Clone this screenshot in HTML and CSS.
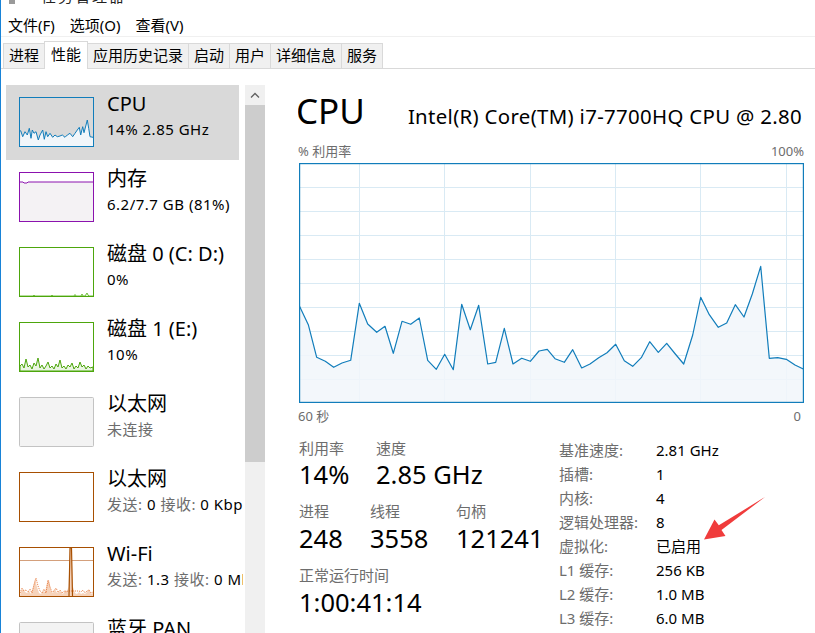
FILE: index.html
```html
<!DOCTYPE html>
<html lang="zh-CN">
<head>
<meta charset="utf-8">
<title>任务管理器</title>
<link rel="stylesheet" href="styles.css">
</head>
<body>
<div class="win">
  <div class="titlebar">
    <span class="ticon"></span><span class="ttext">任务管理器</span>
  </div>
  <div class="menubar">
    <span class="menu">文件(F)</span><span class="menu">选项(O)</span><span class="menu">查看(V)</span>
  </div>
  <div class="tabs">
    <div class="tab">进程</div>
    <div class="tab active">性能</div>
    <div class="tab">应用历史记录</div>
    <div class="tab">启动</div>
    <div class="tab">用户</div>
    <div class="tab">详细信息</div>
    <div class="tab">服务</div>
  </div>
  <div class="content">
    <div class="side">
      <div class="list">
        <div class="item selected">
          <svg class="thumb" width="75" height="50" viewBox="0 0 75 50">
            <polygon fill="#f1f6fa" points="1,49 1.7,33.7 3.7,39.7 6,34.7 8.3,38 10.3,31.3 12,41.3 13.3,33 15,36.3 17,34.7 19.3,43 21,38 23.7,33 25.3,42.3 27,34.7 28.7,39.7 31,36.3 33.7,40.3 36,38 38.3,39.7 41,39 43.3,38 46,40.3 48.3,38 51,36.3 53.7,39.7 56,36.3 58.3,33 60.3,30.3 61.7,38 63.7,29.7 65,35.7 67,28 68.3,23 69.7,31.3 71,39.7 74,40.3 74,49"/>
            <polyline fill="none" stroke="#117dbb" stroke-width="1" points="1,34 1.7,33.7 3.7,39.7 6,34.7 8.3,38 10.3,31.3 12,41.3 13.3,33 15,36.3 17,34.7 19.3,43 21,38 23.7,33 25.3,42.3 27,34.7 28.7,39.7 31,36.3 33.7,40.3 36,38 38.3,39.7 41,39 43.3,38 46,40.3 48.3,38 51,36.3 53.7,39.7 56,36.3 58.3,33 60.3,30.3 61.7,38 63.7,29.7 65,35.7 67,28 68.3,23 69.7,31.3 71,39.7 74,40.3"/>
            <rect x="0.5" y="0.5" width="74" height="49" fill="none" stroke="#117dbb"/>
          </svg>
          <div class="itext">
            <div class="ititle">CPU</div>
            <div class="isub">14% 2.85 GHz</div>
          </div>
        </div>
        <div class="item">
          <svg class="thumb" width="75" height="50" viewBox="0 0 75 50">
            <polygon fill="#f4f2f4" points="1,10 4,10 5,11 8,11 9,10 74,10 74,49 1,49"/>
            <polyline fill="none" stroke="#8b12ae" stroke-width="1" points="1,10 4,10 5,11 8,11 9,10 74,10"/>
            <rect x="0.5" y="0.5" width="74" height="49" fill="none" stroke="#8b12ae"/>
          </svg>
          <div class="itext">
            <div class="ititle">内存</div>
            <div class="isub">6.2/7.7 GB (81%)</div>
          </div>
        </div>
        <div class="item">
          <svg class="thumb" width="75" height="50" viewBox="0 0 75 50">
            <polyline fill="#e5f2dc" stroke="#6fbf3a" stroke-width="1" points="1,49 14,49 15,48 16,49 32,49 33,48 34,49 55,49 56,47.5 57,49 62,49 63,47 64,49 66,49 68,46 69,48 70,49 74,49"/>
            <rect x="0.5" y="0.5" width="74" height="49" fill="none" stroke="#4da60c"/>
          </svg>
          <div class="itext">
            <div class="ititle">磁盘 0 (C: D:)</div>
            <div class="isub">0%</div>
          </div>
        </div>
        <div class="item">
          <svg class="thumb" width="75" height="50" viewBox="0 0 75 50">
            <polygon fill="#eaf5e2" stroke="#4da60c" stroke-width="1" points="1,49 1,44 3,42 5,46 7,37 9,45 11,43 13,47 15,41 17,44 19,36 21,46 23,43 25,47 27,44 29,40 31,46 33,44 35,47 37,42 39,45 41,38 43,46 45,44 47,47 49,43 51,45 53,41 55,47 57,44 59,46 61,40 63,45 65,43 67,47 69,44 71,46 74,45 74,49"/>
            <rect x="0.5" y="0.5" width="74" height="49" fill="none" stroke="#4da60c"/>
          </svg>
          <div class="itext">
            <div class="ititle">磁盘 1 (E:)</div>
            <div class="isub">10%</div>
          </div>
        </div>
        <div class="item">
          <svg class="thumb" width="75" height="50" viewBox="0 0 75 50">
            <rect x="0.5" y="0.5" width="74" height="49" rx="1" fill="#f3f3f3" stroke="#c3c3c3"/>
          </svg>
          <div class="itext">
            <div class="ititle">以太网</div>
            <div class="isub grey">未连接</div>
          </div>
        </div>
        <div class="item">
          <svg class="thumb" width="75" height="50" viewBox="0 0 75 50">
            <rect x="0.5" y="0.5" width="74" height="49" fill="#fff" stroke="#a74f01"/>
          </svg>
          <div class="itext">
            <div class="ititle">以太网</div>
            <div class="isub"><span class="grey">发送:</span> 0 <span class="grey">接收:</span> 0 Kbps</div>
          </div>
        </div>
        <div class="item">
          <svg class="thumb" width="75" height="50" viewBox="0 0 75 50">
            <rect x="0.5" y="0.5" width="74" height="49" fill="#fff"/>
            <line x1="1" y1="13.5" x2="74" y2="13.5" stroke="#d4a07c" stroke-width="1"/>
            <polygon fill="#f6d3bb" points="1,49 2,44 4,42 6,45 8,46 10,44 12,47 14,40 16,32 18,40 20,46 22,47 24,44 26,45 28,36 30,33 32,44 34,46 36,42 38,46 40,44 42,45 44,47 46,43 48,44 49.5,40 51,2 52.5,2 54,40 56,46 58,47 60,45 62,47 64,46 66,47 68,45 70,42 72,47 74,46 74,49"/>
            <polyline fill="none" stroke="#e87d42" stroke-width="1" stroke-dasharray="1 1" points="1,46 3,41 5,44 7,43 9,45 11,42 13,46 15,38 17,31 19,39 21,44 23,46 25,42 27,46 29,33 31,40 33,45 35,44 37,41 39,45 41,43 43,46 45,44 47,45 49,44 60,44 62,45 64,43 66,46 68,44 70,43 72,46 74,45"/>
            <polyline fill="none" stroke="#a74f01" stroke-width="1.2" points="50,49 51,1 52.5,1 53.5,49"/>
            <rect x="0.5" y="0.5" width="74" height="49" fill="none" stroke="#a74f01"/>
          </svg>
          <div class="itext">
            <div class="ititle">Wi-Fi</div>
            <div class="isub"><span class="grey">发送:</span> 1.3 <span class="grey">接收:</span> 0 Mbps</div>
          </div>
        </div>
        <div class="item">
          <svg class="thumb" width="75" height="50" viewBox="0 0 75 50">
            <rect x="0.5" y="0.5" width="74" height="49" rx="1" fill="#f3f3f3" stroke="#c3c3c3"/>
          </svg>
          <div class="itext">
            <div class="ititle">蓝牙 PAN</div>
            <div class="isub grey">未连接</div>
          </div>
        </div>
      </div>
      <div class="scrollbar">
        <div class="sbtn">
          <svg width="20" height="20" viewBox="0 0 20 20"><polyline points="6,12.5 10,8.5 14,12.5" fill="none" stroke="#606060" stroke-width="1.3"/></svg>
        </div>
        <div class="sthumb"></div>
        <div class="strack"></div>
      </div>
    </div>
    <div class="main">
      <div class="header">
        <span class="big">CPU</span>
        <span class="model">Intel(R) Core(TM) i7-7700HQ CPU @ 2.80</span>
      </div>
      <div class="axis top"><span>% 利用率</span><span>100%</span></div>
      <svg class="chart" width="505" height="240" viewBox="298 164 505 240">
        <g stroke="#d9eaf4" stroke-width="1">
          <line x1="298" y1="188.5" x2="802" y2="188.5"/>
          <line x1="298" y1="212.5" x2="802" y2="212.5"/>
          <line x1="298" y1="236.5" x2="802" y2="236.5"/>
          <line x1="298" y1="260.5" x2="802" y2="260.5"/>
          <line x1="298" y1="284.5" x2="802" y2="284.5"/>
          <line x1="298" y1="308.5" x2="802" y2="308.5"/>
          <line x1="298" y1="332.5" x2="802" y2="332.5"/>
          <line x1="298" y1="356.5" x2="802" y2="356.5"/>
          <line x1="298" y1="380.5" x2="802" y2="380.5"/>
          <line x1="358.5" y1="164" x2="358.5" y2="403"/>
          <line x1="443.5" y1="164" x2="443.5" y2="403"/>
          <line x1="529.5" y1="164" x2="529.5" y2="403"/>
          <line x1="614.5" y1="164" x2="614.5" y2="403"/>
          <line x1="699.5" y1="164" x2="699.5" y2="403"/>
          <line x1="785.5" y1="164" x2="785.5" y2="403"/>
        </g>
        <polygon fill="#f1f6fa" fill-opacity="0.85" points="298.3,306.7 307.3,325.7 315.7,358.3 324.3,362.3 332.7,368.3 341,364 349.7,361.3 358.3,304.3 366.7,325 375.7,333.3 384,327.3 392.3,354.3 401,322.3 409.7,325.3 418.3,319 426.7,361.3 435.3,370.3 443.7,355.3 452.3,370.7 460.7,305.3 469.3,330.7 477.7,306.3 486.7,365 494.7,363.3 503.3,329.3 512,365 520.7,359.3 529.3,362.3 538,352 546.3,350.3 554,359.7 563.3,363.3 571.7,350.7 580.7,369 589,365 597.7,358.7 606,353.7 614.7,345.3 623.3,361.7 631.7,367.3 640.3,358.7 648.7,342.7 657.3,353.3 665.7,344.3 674.3,355 682.7,365 691.7,336 699.7,298.3 708.3,315.7 717.3,328.3 725.7,324 734.3,305.7 743,318 751.3,295 759.7,267.3 768.3,359.3 776.7,358.7 785.3,360.3 794,366 802.3,370 802.3,403 298.3,403"/>
        <polyline fill="none" stroke="#117dbb" stroke-width="1.2" stroke-linejoin="round" points="298.3,306.7 307.3,325.7 315.7,358.3 324.3,362.3 332.7,368.3 341,364 349.7,361.3 358.3,304.3 366.7,325 375.7,333.3 384,327.3 392.3,354.3 401,322.3 409.7,325.3 418.3,319 426.7,361.3 435.3,370.3 443.7,355.3 452.3,370.7 460.7,305.3 469.3,330.7 477.7,306.3 486.7,365 494.7,363.3 503.3,329.3 512,365 520.7,359.3 529.3,362.3 538,352 546.3,350.3 554,359.7 563.3,363.3 571.7,350.7 580.7,369 589,365 597.7,358.7 606,353.7 614.7,345.3 623.3,361.7 631.7,367.3 640.3,358.7 648.7,342.7 657.3,353.3 665.7,344.3 674.3,355 682.7,365 691.7,336 699.7,298.3 708.3,315.7 717.3,328.3 725.7,324 734.3,305.7 743,318 751.3,295 759.7,267.3 768.3,359.3 776.7,358.7 785.3,360.3 794,366 802.3,370"/>
        <rect x="298.5" y="164.5" width="504" height="239" fill="none" stroke="#117dbb" stroke-width="1.4"/>
      </svg>
      <div class="axis bottom"><span>60 秒</span><span>0</span></div>
      <div class="stats">
        <div class="left">
          <div class="srow">
            <div class="stat w77"><div class="lbl">利用率</div><div class="val">14%</div></div>
            <div class="stat"><div class="lbl">速度</div><div class="val">2.85 GHz</div></div>
          </div>
          <div class="srow gap">
            <div class="stat w71"><div class="lbl">进程</div><div class="val">248</div></div>
            <div class="stat w86"><div class="lbl">线程</div><div class="val">3558</div></div>
            <div class="stat"><div class="lbl">句柄</div><div class="val">121241</div></div>
          </div>
          <div class="srow gap">
            <div class="stat"><div class="lbl">正常运行时间</div><div class="val">1:00:41:14</div></div>
          </div>
        </div>
        <div class="right">
          <div class="kv"><span class="k">基准速度:</span><span class="v">2.81 GHz</span></div>
          <div class="kv"><span class="k">插槽:</span><span class="v">1</span></div>
          <div class="kv"><span class="k">内核:</span><span class="v">4</span></div>
          <div class="kv"><span class="k">逻辑处理器:</span><span class="v">8</span></div>
          <div class="kv"><span class="k">虚拟化:</span><span class="v">已启用</span></div>
          <div class="kv"><span class="k">L1 缓存:</span><span class="v">256 KB</span></div>
          <div class="kv"><span class="k">L2 缓存:</span><span class="v">1.0 MB</span></div>
          <div class="kv"><span class="k">L3 缓存:</span><span class="v">6.0 MB</span></div>
        </div>
      </div>
    </div>
  </div>
  <svg class="arrow" width="70" height="50" viewBox="700 494 70 50">
    <polygon fill="#f03c3c" points="765,497 721.5,530 725.5,536 704,539.5 714.5,519.5 718.8,525.3"/>
  </svg>
</div>
</body>
</html>
```

FILE: styles.css
```css
html, body {
  margin: 0;
  padding: 0;
  background: #fff;
  overflow: hidden;
}
body {
  font-family: "Noto Sans", "Noto Sans CJK SC", sans-serif;
  color: #000;
}
.win {
  position: relative;
  width: 814px;
  height: 633px;
  border-left: 1px solid #1883d7;
  overflow: hidden;
  background: #fff;
}
.titlebar {
  height: 14px;
  overflow: hidden;
  display: flex;
  align-items: flex-start;
}
.ticon {
  display: inline-block;
  width: 6px;
  height: 4px;
  margin: 0 0 0 8px;
  background: #9a9a9a;
}
.ttext {
  font-size: 15px;
  line-height: 15px;
  margin-top: -11px;
  margin-left: 26px;
  color: #222;
  letter-spacing: 2px;
}
.menubar {
  height: 22px;
  line-height: 22px;
  font-size: 15px;
  display: flex;
  border-bottom: 1px solid #f0f0f0;
}
.menu {
  padding: 0 8px 0 7px;
}
.tabs {
  margin-top: 4px;
  height: 27px;
  display: flex;
  align-items: flex-end;
  padding-left: 2px;
  border-bottom: 1px solid #d9d9d9;
}
.tab {
  box-sizing: border-box;
  height: 25px;
  line-height: 23px;
  font-size: 15px;
  padding: 0 5px;
  background: #f0f0f0;
  border: 1px solid #d9d9d9;
  border-bottom: none;
  margin-right: -1px;
}
.tab.active {
  height: 28px;
  line-height: 24px;
  padding: 0 6px;
  background: #fff;
  margin-bottom: -1px;
  position: relative;
  z-index: 1;
}
.content {
  display: flex;
  height: 564px;
}
.side {
  width: 264px;
  display: flex;
  padding-top: 16px;
  box-sizing: border-box;
  flex: none;
}
.list {
  width: 237px;
  margin-left: 5px;
  overflow: hidden;
  flex: none;
}
.item {
  width: 233px;
  height: 75px;
  display: flex;
  box-sizing: border-box;
  padding: 12px 0 0 13px;
  white-space: nowrap;
}
.item.selected {
  background: #d9d9d9;
}
.thumb {
  flex: none;
  display: block;
}
.itext {
  margin-left: 13px;
  margin-top: -5px;
}
.ititle {
  font-size: 20px;
  line-height: 24px;
}
.isub {
  font-size: 15px;
  line-height: 20px;
  margin-top: 3px;
  letter-spacing: 0.5px;
}
.grey {
  color: #6d6d6d;
}
.scrollbar {
  width: 20px;
  margin-left: 2px;
  display: flex;
  flex-direction: column;
  flex: none;
}
.sbtn {
  height: 20px;
  background: #f0f0f0;
}
.sbtn svg {
  display: block;
}
.sthumb {
  height: 357px;
  background: #cdcdcd;
}
.strack {
  flex: 1;
  background: #f0f0f0;
}
.main {
  padding: 20px 0 0 33px;
  width: 517px;
  flex: none;
  box-sizing: border-box;
}
.header {
  display: flex;
  align-items: baseline;
  height: 44px;
  white-space: nowrap;
  overflow: hidden;
  width: 506px;
}
.big {
  font-size: 35px;
  line-height: 44px;
  margin-left: -2px;
}
.model {
  font-size: 20.4px;
  letter-spacing: 0.32px;
  margin-left: 43px;
}
.axis {
  display: flex;
  justify-content: space-between;
  font-size: 13px;
  line-height: 18px;
  color: #6d6d6d;
  width: 506px;
}
.axis.top {
  margin-top: 9px;
}
.axis.bottom {
  margin-top: 4px;
  width: 503px;
}
.chart {
  display: block;
  margin-top: 3px;
  margin-left: 1px;
}
.stats {
  display: flex;
  margin-top: 13px;
}
.left {
  width: 261px;
  flex: none;
  padding-left: 1px;
  box-sizing: border-box;
}
.srow {
  display: flex;
}
.srow.gap {
  margin-top: 12px;
}
.stat.w77 { width: 77px; }
.stat.w71 { width: 71px; }
.stat.w86 { width: 86px; }
.lbl {
  font-size: 15px;
  line-height: 20px;
  color: #6d6d6d;
}
.val {
  font-size: 25.5px;
  line-height: 30px;
  margin-top: 1px;
}
.srow.gap .val { margin-top: 2px; }
.right {
  margin-top: 0;
}
.kv {
  display: flex;
  font-size: 15px;
  line-height: 24px;
}
.k {
  width: 97px;
  color: #6d6d6d;
}
.arrow {
  position: absolute;
  left: 699px;
  top: 494px;
}
```
